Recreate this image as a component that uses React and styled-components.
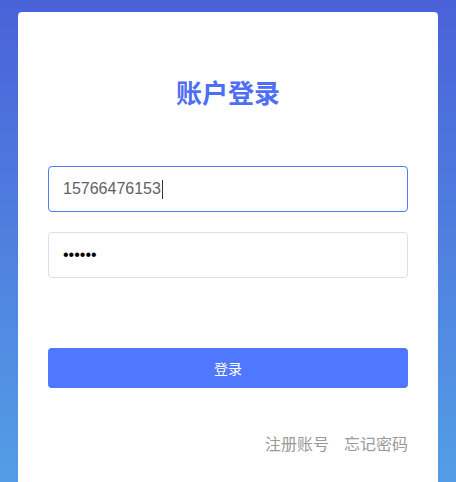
import React from 'react';
import styled, { createGlobalStyle } from 'styled-components';

const GlobalStyle = createGlobalStyle`
  html, body {
    margin: 0;
    padding: 0;
    height: 100%;
  }
  body {
    font-family: Arial, "Liberation Sans", "Noto Sans CJK SC", sans-serif;
    background: linear-gradient(180deg, #4a62d8 0%, #549de6 100%);
    overflow: hidden;
  }
`;

const Page = styled.div`
  height: 482px;
  padding-top: 12px;
  box-sizing: border-box;
  display: flex;
  justify-content: center;
`;

const Card = styled.div`
  width: 420px;
  background: #fff;
  border-radius: 4px 4px 0 0;
  padding: 64px 30px 0;
  box-sizing: border-box;
  display: flex;
  flex-direction: column;
`;

const Title = styled.h2`
  margin: 0;
  text-align: center;
  font-size: 26px;
  line-height: 36px;
  font-weight: bold;
  color: #4e6ef4;
`;

const Form = styled.div`
  margin-top: 54px;
  display: flex;
  flex-direction: column;
  gap: 20px;
`;

const Field = styled.div`
  height: 46px;
  box-sizing: border-box;
  border: 1px solid ${p => (p.$focused ? '#4f7cf7' : '#dcdfe6')};
  border-radius: 4px;
  padding: 0 14px;
  display: flex;
  align-items: center;
  font-size: 16px;
  color: ${p => (p.$dots ? '#000' : '#606266')};
`;

const Caret = styled.span`
  display: inline-block;
  width: 1px;
  height: 19px;
  background: #333;
  margin-left: 1px;
`;

const Submit = styled.button`
  margin-top: 70px;
  height: 40px;
  border: none;
  border-radius: 4px;
  background: #4f78ff;
  color: #fff;
  font-size: 14px;
  font-family: inherit;
  cursor: pointer;
`;

const Links = styled.div`
  margin-top: 47px;
  display: flex;
  justify-content: flex-end;
  gap: 15px;
  font-size: 16px;
  line-height: 20px;
  color: #999;
`;

const LinkText = styled.span`
  cursor: pointer;
`;

export default function App() {
  return (
    <Page>
      <GlobalStyle />
      <Card>
        <Title>账户登录</Title>
        <Form>
          <Field $focused>
            15766476153
            <Caret />
          </Field>
          <Field $dots>••••••</Field>
        </Form>
        <Submit>登录</Submit>
        <Links>
          <LinkText>注册账号</LinkText>
          <LinkText>忘记密码</LinkText>
        </Links>
      </Card>
    </Page>
  );
}
